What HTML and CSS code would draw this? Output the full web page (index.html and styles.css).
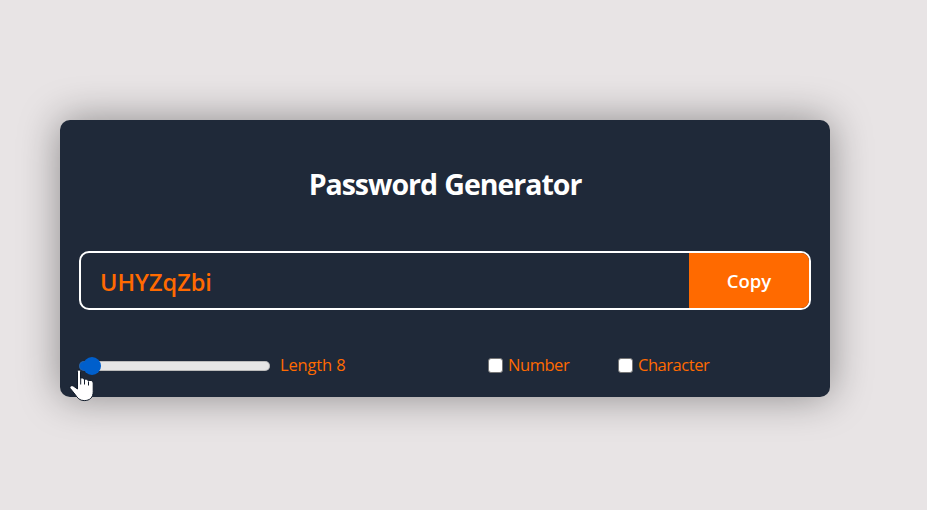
FILE: index.html
```html
<!DOCTYPE html>
<html lang="en">
<head>
<meta charset="utf-8">
<title>Password Generator</title>
<link rel="stylesheet" href="styles.css">
</head>
<body>
<main class="card">
  <h1 class="title"><span>Password Generator</span></h1>
  <div class="field">
    <div class="password"><span>UHYZqZbi</span></div>
    <button class="copy" type="button"><span>Copy</span></button>
  </div>
  <div class="controls">
    <input class="slider" id="length" type="range" min="6" max="100" value="8">
    <label class="length" for="length">Length 8</label>
    <label class="option number"><input class="check" type="checkbox"><span>Number</span></label>
    <label class="option character"><input class="check" type="checkbox"><span>Character</span></label>
  </div>
</main>
<svg class="cursor" width="26" height="33" viewBox="0 0 26 33">
  <path d="M8.5 2.500C8.500.5 11.500.5 11.500 2.500V9.500C12.700 8.600 15 9 15.200 10.600C16.500 9.800 18.800 10.200 19.200 11.800C21.400 10.800 24.200 11.600 24.200 14V22.500C24.200 28.500 20.800 31.600 15.200 31.600C10.700 31.600 8.400 29 6.400 25.800L1.300 19.500C-.2 17.600 2.500 15.700 4.700 17.300L8.500 20Z" fill="#fff" stroke="#111b2a" stroke-width="1"/>
  <path d="M11.700 9.500V15.500M15.500 11V15.500M19.500 12.500V16.500" fill="none" stroke="#111b2a" stroke-width="1"/>
</svg>
</body>
</html>
```

FILE: styles.css
```css
* {
  box-sizing: border-box;
}

body {
  margin: 0;
  height: 510px;
  overflow: hidden;
  background: #e8e4e5;
  color: #ff6a00;
  font-family: "Open Sans", "Noto Sans", sans-serif;
}

.card {
  display: flow-root;
  width: 770px;
  height: 276.6px;
  margin: 120.4px 0 0 60px;
  padding: 42.6px 19px 0;
  border-radius: 10px;
  background: #1f2939;
  box-shadow: 0 0 40px rgba(0, 0, 0, 0.4);
}

.title {
  margin: 0;
  height: 44px;
  color: #fff;
  font-size: 28.5px;
  line-height: 43px;
  font-weight: 700;
  letter-spacing: -1.02px;
  word-spacing: 1px;
  text-align: center;
}

.field {
  display: flex;
  height: 59px;
  margin-top: 44px;
  border: 2px solid #fff;
  border-radius: 10px;
  overflow: hidden;
}

.password {
  flex: 1;
  padding-left: 19px;
  font-size: 23.5px;
  font-weight: 600;
  line-height: 59px;
}

.copy {
  width: 120px;
  padding: 0;
  border: 0;
  background: #ff6a00;
  color: #fff;
  font: 600 18.5px/56px "Open Sans", sans-serif;
}

.controls {
  display: flex;
  align-items: center;
  height: 24px;
  margin-top: 43px;
  font-size: 16.5px;
  line-height: 24px;
}

.slider {
  appearance: none;
  flex: none;
  width: 191px;
  height: 18px;
  margin: 2px 0 0;
  background: transparent;
}

.slider::-webkit-slider-runnable-track {
  height: 10px;
  border-radius: 5px;
  background: linear-gradient(90deg, #005fcc 12px, #e6e6e6 12px);
  box-shadow: inset 0 0 0 1px rgba(110, 110, 110, 0.35);
}

.slider::-webkit-slider-thumb {
  appearance: none;
  width: 18px;
  height: 18px;
  margin-top: -4px;
  border-radius: 50%;
  background: #005fcc;
}

.length {
  width: 218px;
  padding-left: 10px;
  letter-spacing: -0.15px;
}

.option {
  display: flex;
  align-items: center;
  width: 130px;
  letter-spacing: -0.45px;
}

.check {
  appearance: none;
  width: 15px;
  height: 15px;
  margin: 1px 5px 0 0;
  border: 1px solid #767676;
  border-radius: 3px;
  background: #fff;
}

.cursor {
  position: absolute;
  left: 69px;
  top: 369px;
}
```
